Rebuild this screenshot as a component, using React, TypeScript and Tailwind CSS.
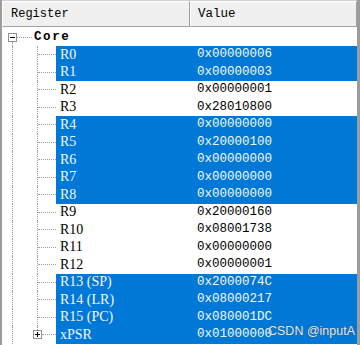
import React from "react";

type Row = { name: string; value: string; sel: boolean };

const rows: Row[] = [
  { name: "R0", value: "0x00000006", sel: true },
  { name: "R1", value: "0x00000003", sel: true },
  { name: "R2", value: "0x00000001", sel: false },
  { name: "R3", value: "0x28010800", sel: false },
  { name: "R4", value: "0x00000000", sel: true },
  { name: "R5", value: "0x20000100", sel: true },
  { name: "R6", value: "0x00000000", sel: true },
  { name: "R7", value: "0x00000000", sel: true },
  { name: "R8", value: "0x00000000", sel: true },
  { name: "R9", value: "0x20000160", sel: false },
  { name: "R10", value: "0x08001738", sel: false },
  { name: "R11", value: "0x00000000", sel: false },
  { name: "R12", value: "0x00000001", sel: false },
  { name: "R13 (SP)", value: "0x2000074C", sel: true },
  { name: "R14 (LR)", value: "0x08000217", sel: true },
  { name: "R15 (PC)", value: "0x080001DC", sel: true },
  { name: "xPSR", value: "0x01000000", sel: true },
];

const mono = { fontFamily: '"Liberation Mono", "DejaVu Sans Mono", monospace' };
const serif = { fontFamily: '"Liberation Serif", "DejaVu Serif", serif' };

function Box({ plus }: { plus?: boolean }) {
  return (
    <div className="w-[9px] h-[9px] border border-[#919191] bg-white flex items-center justify-center relative shrink-0">
      <div className="w-[5px] h-px bg-black" />
      {plus && <div className="absolute w-px h-[5px] bg-black" />}
    </div>
  );
}

export default function App() {
  return (
    <div
      className="relative w-[360px] h-[345px] overflow-hidden bg-white border-l-2 border-r-[3px] border-[#9c9c9c] text-black"
      style={mono}
    >
      {/* header */}
      <div className="flex h-[27px] border-t border-[#d0d0d0] bg-[#f0f0f0]">
        <div className="w-[188px] flex items-center pl-[8px] text-[12px] border-l border-t border-white border-r border-r-[#a0a0a0] border-b border-b-[#a0a0a0]">
          Register
        </div>
        <div className="flex-1 flex items-center pl-[7px] text-[12.5px] border-l border-t border-white border-r border-r-[#a0a0a0] border-b border-b-[#a0a0a0]">
          Value
        </div>
      </div>

      <div className="pt-[1.5px]">
        {/* Core row */}
        <div className="flex h-[17.5px]">
          <div className="w-[6px]" />
          <div className="w-[9px] flex flex-col items-center">
            <div className="flex-1" />
            <Box />
            <div className="flex-1 w-0 border-l border-dotted border-[#a0a0a0]" />
          </div>
          <div className="w-[17px] flex items-center">
            <div className="w-[15px] h-0 border-t border-dotted border-[#a0a0a0]" />
          </div>
          <div className="flex items-center text-[12.5px] font-bold tracking-[1.6px]">Core</div>
        </div>

        {rows.map((r, i) => {
          const last = i === rows.length - 1;
          return (
            <div key={r.name} className="flex h-[17.5px]">
              <div className="w-[10px]" />
              <div className="w-[25px] border-l border-dotted border-[#a0a0a0]" />
              {last ? (
                <div className="w-[19px] flex items-center relative">
                  <div className="-ml-[4px]">
                    <Box plus />
                  </div>
                  <div className="flex-1 h-0 border-t border-dotted border-[#a0a0a0]" />
                  <div className="absolute left-0 top-0 h-[4px] w-0 border-l border-dotted border-[#a0a0a0]" />
                </div>
              ) : (
                <div className="w-[19px] flex items-center border-l border-dotted border-[#a0a0a0]">
                  <div className="w-full h-0 border-t border-dotted border-[#a0a0a0]" />
                </div>
              )}
              <div
                className={`flex flex-1 ${r.sel ? "bg-[#0078d7] text-[#f4f8fc]" : "text-black"}`}
              >
                <div
                  className="w-[134px] pl-[4px] flex items-center text-[14px] leading-none whitespace-pre"
                  style={serif}
                >
                  {r.name}
                </div>
                <div className="flex-1 pl-[7px] flex items-center text-[12.5px]">{r.value}</div>
              </div>
            </div>
          );
        })}
      </div>

      <div
        className="absolute left-[266px] top-[322px] text-[12.5px] text-[#e8e8e8]"
        style={{
          fontFamily: '"Liberation Sans", Arial, sans-serif',
          textShadow: "0 0 1px rgba(60,60,60,0.8)",
        }}
      >
        CSDN @inputA
      </div>
    </div>
  );
}
